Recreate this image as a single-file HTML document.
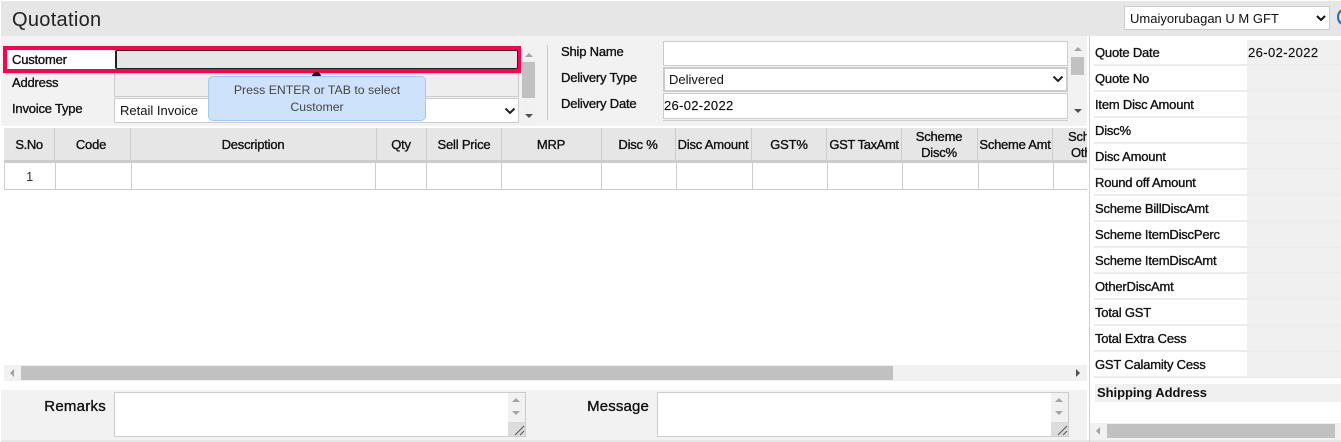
<!DOCTYPE html>
<html>
<head>
<meta charset="utf-8">
<style>
html,body{margin:0;padding:0;background:#fff}
body{width:1341px;height:442px;overflow:hidden;position:relative;font-family:"Liberation Sans",sans-serif;font-size:13px;color:#111}
.a{position:absolute;box-sizing:border-box}
.t{position:absolute;white-space:nowrap;line-height:16px;letter-spacing:-.2px;-webkit-text-stroke:.35px #111}
.c{text-align:center;transform:translateX(-50%)}
.inp{position:absolute;box-sizing:border-box;background:#fff;border:1px solid #ccc}
.up,.dn,.lf,.rt{position:absolute;width:0;height:0;border-style:solid;border-color:transparent}
.up{border-width:0 4px 4px;border-bottom-color:#a3a3a3}
.dn{border-width:4px 4px 0;border-top-color:#505050}
.lf{border-width:4px 4px 4px 0;border-right-color:#a3a3a3}
.rt{border-width:4px 0 4px 4px;border-left-color:#505050}
.v{position:absolute;top:128px;width:1px;height:32px;background:#ccc}
.w{position:absolute;top:163px;width:1px;height:27px;background:#ccc}
.rl{position:absolute;left:1094px;width:152px;height:24px;background:#fff}
.rv{position:absolute;left:1247px;width:94px;height:24px;background:#f0f0f0}
.sep{position:absolute;left:1094px;width:247px;height:2px;background:#ececec}
</style>
</head>
<body>
<div class="a" style="left:1px;top:1px;width:1340px;height:35px;background:#e6e6e6"></div>
<div class="t" style="left:12px;top:9px;font-size:20px;line-height:22px;letter-spacing:.3px;-webkit-text-stroke:0;color:#222">Quotation</div>
<select class="a" style="left:1124px;top:6px;width:206px;height:24px;background:#fff;border:1px solid #ccc;font:13px 'Liberation Sans',sans-serif;color:#111;padding-left:1px"><option>Umaiyorubagan U M GFT</option></select>
<div class="a" style="left:1337px;top:9px;width:12px;height:16px;border-radius:50%;background:#1277bd"></div>
<div class="a" style="left:1339px;top:12px;width:6px;height:10px;border-radius:50%;background:#e6e6e6"></div>

<div class="a" style="left:1px;top:36px;width:1086px;height:90px;background:#f2f2f2"></div>

<!-- customer block -->
<div class="a" style="left:3px;top:46px;width:518px;height:27px;border:4px solid #ff0050;background:#f2f2f2"></div>
<div class="a" style="left:7px;top:50px;width:108px;height:19px;background:#fff"></div>
<div class="a" style="left:115px;top:50px;width:403px;height:19px;background:#e6e6e6;border:1px solid #222;border-left-width:2px;border-radius:2px"></div>
<div class="t" style="left:12px;top:52px">Customer</div>
<div class="t" style="left:12px;top:75px">Address</div>
<div class="t" style="left:12px;top:101px">Invoice Type</div>
<div class="a" style="left:114px;top:73px;width:405px;height:24px;background:#eee;border:1px solid #ccc;border-top:0"></div>
<div class="inp" style="left:114px;top:98px;width:405px;height:25px"></div>
<div class="t" style="left:120px;top:103px;-webkit-text-stroke:0;letter-spacing:0">Retail Invoice</div>
<svg class="a" style="left:504px;top:107px" width="12" height="8"><path d="M1.500 1.500 6 6 10.500 1.500" fill="none" stroke="#222" stroke-width="2"/></svg>
<div class="a" style="left:522px;top:46px;width:14px;height:79px;background:#f1f1f1"></div>
<div class="up" style="left:525px;top:53px"></div>
<div class="a" style="left:522px;top:62px;width:13px;height:36px;background:#c1c1c1"></div>
<div class="dn" style="left:525px;top:114px"></div>

<!-- tooltip -->
<div class="a" style="left:312px;top:72px;width:9px;height:5px;background:#111;border-radius:5px 5px 0 0"></div>
<div class="a" style="left:208px;top:76px;width:218px;height:45px;background:#cfe2fc;border:1px solid #9ec9f8;border-radius:5px;text-align:center;color:#444;font-size:12.3px;line-height:17px;padding-top:5px">Press ENTER or TAB to select<br>Customer</div>

<!-- ship block -->
<div class="a" style="left:547px;top:45px;width:1px;height:75px;background:#c8c8c8"></div>
<div class="t" style="left:561px;top:44px">Ship Name</div>
<div class="t" style="left:561px;top:70px">Delivery Type</div>
<div class="t" style="left:561px;top:96px">Delivery Date</div>
<div class="inp" style="left:663px;top:41px;width:405px;height:25px"></div>
<div class="a" style="left:663px;top:67px;width:405px;height:25px;background:#fff;border:2px solid #ccc"></div>
<div class="t" style="left:669px;top:72px;-webkit-text-stroke:0;letter-spacing:0">Delivered</div>
<svg class="a" style="left:1052px;top:75px" width="12" height="8"><path d="M1.500 1.500 6 6 10.500 1.500" fill="none" stroke="#222" stroke-width="2"/></svg>
<div class="inp" style="left:663px;top:93px;width:405px;height:26px"></div>
<div class="t" style="left:664px;top:98px;-webkit-text-stroke:.15px #111;letter-spacing:.3px">26-02-2022</div>
<div class="a" style="left:663px;top:120px;width:405px;height:1px;background:#ccc"></div>
<div class="up" style="left:1074px;top:47px"></div>
<div class="a" style="left:1071px;top:57px;width:13px;height:18px;background:#c1c1c1"></div>
<div class="dn" style="left:1074px;top:109px"></div>

<!-- table -->
<div class="a" style="left:4px;top:128px;width:1083px;height:32px;background:#e6e6e6"></div>
<div class="a" style="left:4px;top:160px;width:1083px;height:3px;background:#ccc"></div>
<div class="a" style="left:4px;top:189px;width:1083px;height:1px;background:#ccc"></div>
<div class="a" style="left:4px;top:163px;width:1px;height:27px;background:#ccc"></div>

<div class="v" style="left:54px"></div><div class="v" style="left:130px"></div><div class="v" style="left:376px"></div><div class="v" style="left:426px"></div><div class="v" style="left:501px"></div><div class="v" style="left:601px"></div><div class="v" style="left:675px"></div><div class="v" style="left:751px"></div><div class="v" style="left:826px"></div><div class="v" style="left:901px"></div><div class="v" style="left:977px"></div><div class="v" style="left:1052px"></div>
<div class="w" style="left:55px"></div><div class="w" style="left:131px"></div><div class="w" style="left:375px"></div><div class="w" style="left:426px"></div><div class="w" style="left:501px"></div><div class="w" style="left:601px"></div><div class="w" style="left:676px"></div><div class="w" style="left:752px"></div><div class="w" style="left:827px"></div><div class="w" style="left:902px"></div><div class="w" style="left:978px"></div><div class="w" style="left:1053px"></div>

<div class="t c" style="left:29px;top:137px;letter-spacing:-.4px">S.No</div>
<div class="t c" style="left:91px;top:137px">Code</div>
<div class="t c" style="left:253px;top:137px">Description</div>
<div class="t c" style="left:401px;top:137px">Qty</div>
<div class="t c" style="left:464px;top:137px">Sell Price</div>
<div class="t c" style="left:551px;top:137px">MRP</div>
<div class="t c" style="left:638px;top:137px">Disc %</div>
<div class="t c" style="left:713px;top:137px;letter-spacing:-.2px">Disc Amount</div>
<div class="t c" style="left:789px;top:137px">GST%</div>
<div class="t c" style="left:864px;top:137px;letter-spacing:-.4px">GST TaxAmt</div>
<div class="t c" style="left:939px;top:129px">Scheme<br>Disc%</div>
<div class="t c" style="left:1015px;top:137px;letter-spacing:-.25px">Scheme Amt</div>
<div style="position:absolute;left:1053px;top:128px;width:34px;height:32px;overflow:hidden"><div class="t" style="left:15px;top:1px">Scheme</div><div class="t" style="left:18px;top:17px">Other</div></div>
<div class="t" style="left:26px;top:169px;-webkit-text-stroke:0;color:#333">1</div>

<!-- horizontal scroll -->
<div class="a" style="left:4px;top:365px;width:1083px;height:16px;background:#f1f1f1"></div>
<div class="a" style="left:21px;top:366px;width:872px;height:14px;background:#c1c1c1"></div>
<div class="lf" style="left:10px;top:369px"></div>
<div class="rt" style="left:1076px;top:369px"></div>

<!-- bottom -->
<div class="a" style="left:1px;top:390px;width:1086px;height:50px;background:#f2f2f2"></div>
<div class="a" style="left:1px;top:440px;width:1340px;height:2px;background:#e6e6e6"></div>
<div class="t" style="right:1235px;top:398px;font-size:15px;line-height:18px;letter-spacing:.25px">Remarks</div>
<div class="t" style="right:692px;top:398px;font-size:15px;line-height:18px;letter-spacing:.15px">Message</div>
<div class="inp" style="left:114px;top:392px;width:412px;height:45px"></div>
<div class="a" style="left:508px;top:393px;width:17px;height:43px;background:#f1f1f1"></div>
<div class="a" style="left:508px;top:422px;width:17px;height:14px;background:#dcdcdc"></div>
<div class="up" style="left:512px;top:398px"></div><div class="dn" style="left:512px;top:411px;border-top-color:#a3a3a3"></div>
<svg class="a" style="left:514px;top:425px" width="11" height="11"><path d="M1 10 10 1M6 10 10 6" stroke="#555" stroke-width="1" fill="none"/></svg>
<div class="inp" style="left:657px;top:392px;width:412px;height:45px"></div>
<div class="a" style="left:1051px;top:393px;width:17px;height:43px;background:#f1f1f1"></div>
<div class="a" style="left:1051px;top:422px;width:17px;height:14px;background:#dcdcdc"></div>
<div class="up" style="left:1055px;top:398px"></div><div class="dn" style="left:1055px;top:411px;border-top-color:#a3a3a3"></div>
<svg class="a" style="left:1057px;top:425px" width="11" height="11"><path d="M1 10 10 1M6 10 10 6" stroke="#555" stroke-width="1" fill="none"/></svg>

<!-- right panel -->
<div class="a" style="left:1089px;top:36px;width:1px;height:406px;background:#d0d0d0"></div>
<div class="rl" style="top:40px"></div><div class="rv" style="top:40px"></div><div class="sep" style="top:64px"></div>
<div class="rl" style="top:66px"></div><div class="rv" style="top:66px"></div><div class="sep" style="top:90px"></div>
<div class="rl" style="top:92px"></div><div class="rv" style="top:92px"></div><div class="sep" style="top:116px"></div>
<div class="rl" style="top:118px"></div><div class="rv" style="top:118px"></div><div class="sep" style="top:142px"></div>
<div class="rl" style="top:144px"></div><div class="rv" style="top:144px"></div><div class="sep" style="top:168px"></div>
<div class="rl" style="top:170px"></div><div class="rv" style="top:170px"></div><div class="sep" style="top:194px"></div>
<div class="rl" style="top:196px"></div><div class="rv" style="top:196px"></div><div class="sep" style="top:220px"></div>
<div class="rl" style="top:222px"></div><div class="rv" style="top:222px"></div><div class="sep" style="top:246px"></div>
<div class="rl" style="top:248px"></div><div class="rv" style="top:248px"></div><div class="sep" style="top:272px"></div>
<div class="rl" style="top:274px"></div><div class="rv" style="top:274px"></div><div class="sep" style="top:298px"></div>
<div class="rl" style="top:300px"></div><div class="rv" style="top:300px"></div><div class="sep" style="top:324px"></div>
<div class="rl" style="top:326px"></div><div class="rv" style="top:326px"></div><div class="sep" style="top:350px"></div>
<div class="rl" style="top:352px"></div><div class="rv" style="top:352px"></div><div class="sep" style="top:376px"></div>

<div class="t" style="left:1095px;top:45px">Quote Date</div>
<div class="t" style="left:1248px;top:45px;-webkit-text-stroke:.15px #111;letter-spacing:.4px">26-02-2022</div>
<div class="t" style="left:1095px;top:71px">Quote No</div>
<div class="t" style="left:1095px;top:97px">Item Disc Amount</div>
<div class="t" style="left:1095px;top:123px">Disc%</div>
<div class="t" style="left:1095px;top:149px">Disc Amount</div>
<div class="t" style="left:1095px;top:175px">Round off Amount</div>
<div class="t" style="left:1095px;top:201px">Scheme BillDiscAmt</div>
<div class="t" style="left:1095px;top:227px">Scheme ItemDiscPerc</div>
<div class="t" style="left:1095px;top:253px">Scheme ItemDiscAmt</div>
<div class="t" style="left:1095px;top:279px">OtherDiscAmt</div>
<div class="t" style="left:1095px;top:305px">Total GST</div>
<div class="t" style="left:1095px;top:331px">Total Extra Cess</div>
<div class="t" style="left:1095px;top:357px">GST Calamity Cess</div>

<div class="a" style="left:1095px;top:384px;width:246px;height:18px;background:#f0f0f0"></div>
<div class="t" style="left:1097px;top:385px;font-weight:bold;-webkit-text-stroke:0;letter-spacing:-.05px">Shipping Address</div>
<div class="a" style="left:1090px;top:423px;width:251px;height:17px;background:#f1f1f1"></div>
<div class="a" style="left:1107px;top:424px;width:228px;height:14px;background:#c1c1c1"></div>
<div class="lf" style="left:1096px;top:427px"></div>
</body>
</html>
